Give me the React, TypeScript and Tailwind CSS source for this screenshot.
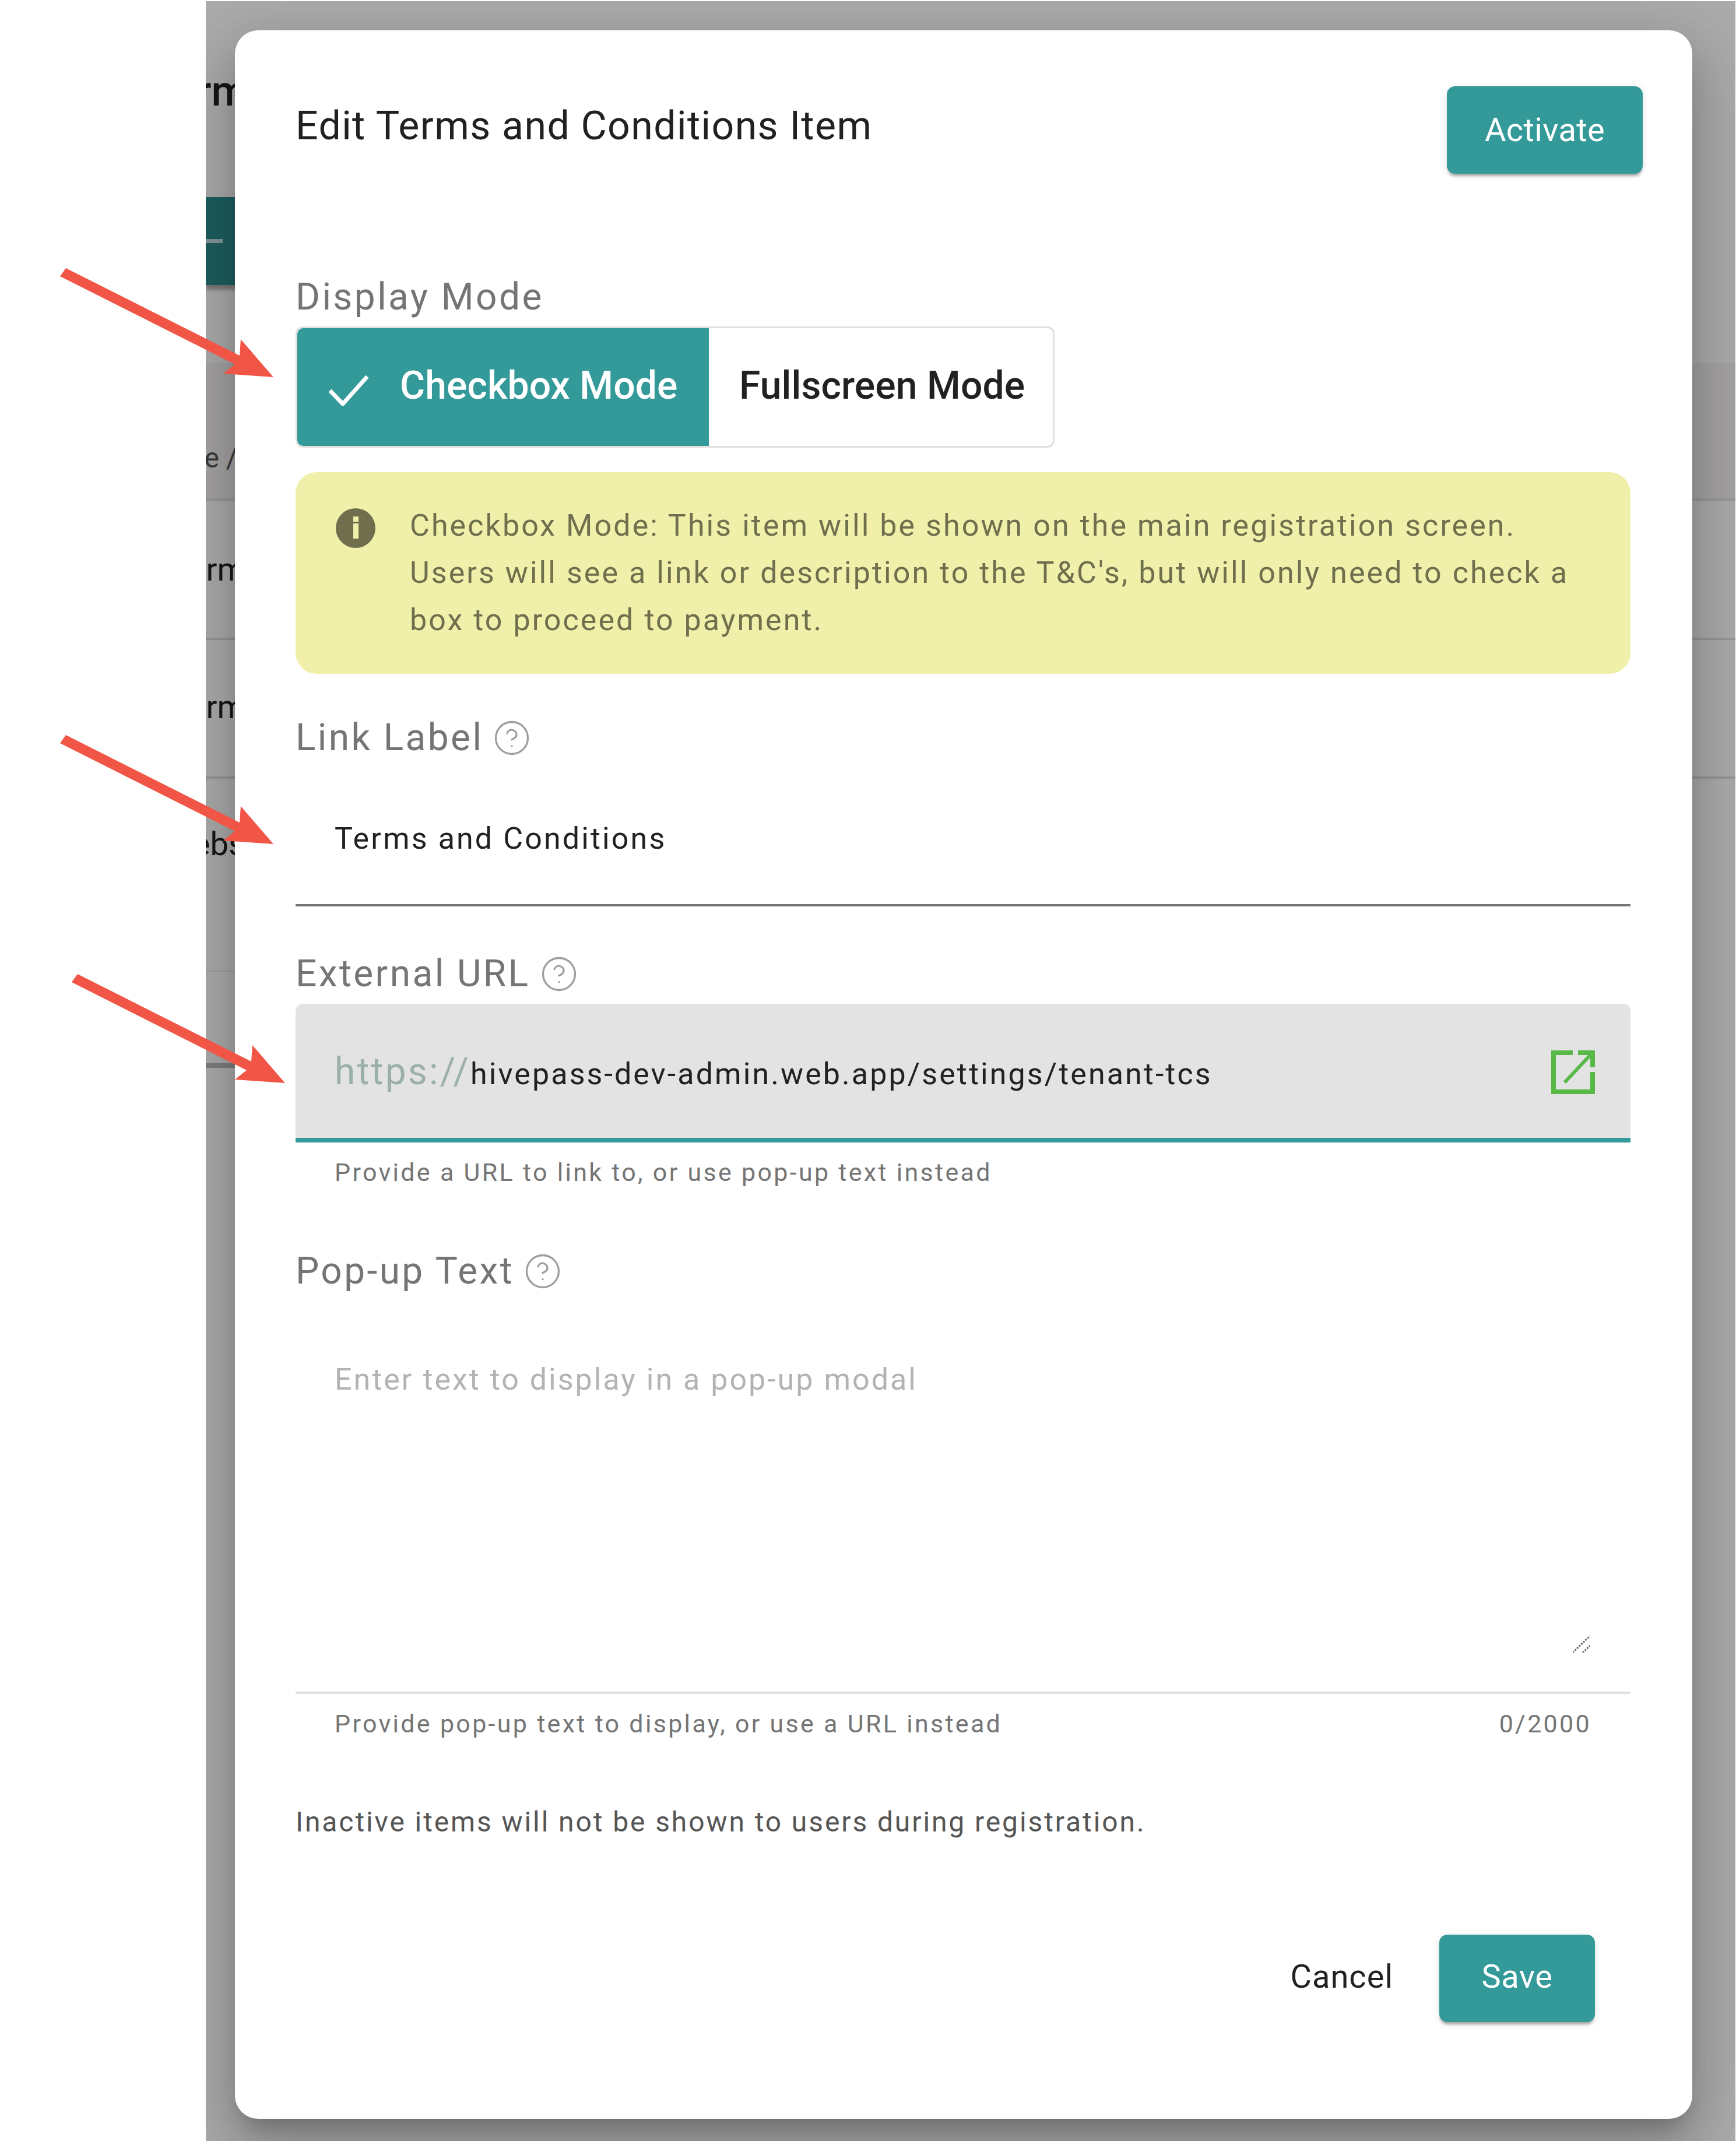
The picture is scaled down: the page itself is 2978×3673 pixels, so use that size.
import { CircleHelp } from "lucide-react";

const ROBOTO = "font-['Roboto',sans-serif]";
const ARROW = "113,460 411,610 413,582 469,647 383,641 403,625 103,474";

function FieldLabel({ text, help = true, className = "" }: { text: string; help?: boolean; className?: string }) {
  return (
    <div className={`flex h-[80px] items-center gap-[16px] pt-[4px] text-[64px] leading-[80px] tracking-[3.4px] text-[#757575] ${className}`}>
      <span>{text}</span>
      {help ? <CircleHelp className="h-[66px] w-[66px] text-[#9e9e9e]" strokeWidth={1.2} /> : null}
    </div>
  );
}

function Backdrop() {
  return (
    <div className="flex h-full flex-col text-[#212121]">
      <div className="flex h-[185px] shrink-0 items-end">
        <span className="-ml-[95px] whitespace-nowrap text-[72px] font-medium leading-[60px]">Terms</span>
      </div>
      <div className="mt-[151px] flex h-[151px] w-[200px] shrink-0 items-center bg-[#2e8c8c] shadow-[0_8px_6px_rgba(0,0,0,0.3)]">
        <div className="h-[7px] w-[29px] bg-white/70"></div>
      </div>
      <div className="mt-[134px] flex h-[236px] shrink-0 items-center border-b-[4px] border-[#e0e0e0] bg-[#f7f4f4] pt-[94px]">
        <span className="-ml-[105px] whitespace-nowrap text-[48px] text-[#555]">Name / Type</span>
      </div>
      <div className="flex h-[239px] shrink-0 items-center border-b-[4px] border-[#e0e0e0]">
        <span className="-ml-[60px] whitespace-nowrap text-[56px]">Terms</span>
      </div>
      <div className="flex h-[238px] shrink-0 items-center border-b-[4px] border-[#e0e0e0] pb-[4px]">
        <span className="-ml-[60px] whitespace-nowrap text-[56px]">Terms</span>
      </div>
      <div className="flex h-[331px] w-[50px] shrink-0 items-start border-b-[2px] border-[#ececec] pt-[70px]">
        <span className="-ml-[71px] whitespace-nowrap text-[56px]">Website</span>
      </div>
      <div className="h-[165px] w-[50px] shrink-0 border-b-[8px] border-[#bdbdbd]"></div>
    </div>
  );
}

export default function App() {
  return (
    <div className={`relative flex h-[3673px] w-[2978px] overflow-hidden bg-white ${ROBOTO}`}>
      <div className="w-[353px] shrink-0 bg-white"></div>
      <div className="relative mb-0 mr-px mt-[2px] flex-1 overflow-hidden bg-white">
        <Backdrop />
        <div className="absolute inset-0 bg-black/[0.33]"></div>
        <div className="absolute left-[50px] top-[50px] flex h-[3583px] w-[2500px] flex-col rounded-[40px] bg-white pl-[104px] pr-[106px] shadow-[0_26px_35px_-16px_rgba(0,0,0,0.2),0_56px_89px_7px_rgba(0,0,0,0.14),0_21px_108px_19px_rgba(0,0,0,0.12)]">
          <div className="mt-[96px] flex items-start justify-between">
            <h1 className="text-[68px] font-normal leading-[137px] tracking-[1.4px] text-[#212121]">Edit Terms and Conditions Item</h1>
            <button className="-mr-[21px] flex h-[150px] w-[336px] items-center justify-center rounded-[14px] bg-[#339999] text-[56px] tracking-[0.4px] text-white shadow-[0_6px_4px_-2px_rgba(0,0,0,0.3),0_2px_14px_rgba(0,0,0,0.1)]">
              Activate
            </button>
          </div>

          <FieldLabel text="Display Mode" help={false} className="mt-[170px]" />
          <div className="mt-[12px] flex h-[208px] w-[1302px] rounded-[12px] border-[3px] border-[#e0e0e0]">
            <div className="flex w-[706px] items-center gap-[54px] rounded-l-[10px] bg-[#339999] pl-[54px] text-white">
              <svg viewBox="0 0 68 52" className="mt-[12px] h-[52px] w-[68px]" fill="none" stroke="currentColor" strokeWidth="7">
                <path d="M2 26 L24 49 L66 2" />
              </svg>
              <span className="pb-[5px] text-[66px] font-medium tracking-[0.1px]">Checkbox Mode</span>
            </div>
            <div className="flex flex-1 items-center pb-[5px] pl-[52px] text-[66px] font-medium tracking-[0.1px] text-[#212121]">Fullscreen Mode</div>
          </div>

          <div className="mt-[42px] flex h-[346px] gap-[59px] rounded-[36px] bg-[#f0f0aa] pl-[69px] pt-[62px] text-[#6f6f4e]">
            <div className="flex h-[68px] w-[68px] shrink-0 flex-col items-center gap-[3px] rounded-full bg-[#6f6f4e] pt-[14px]">
              <div className="h-[9px] w-[9px] bg-[#f0f0aa]"></div>
              <div className="h-[26px] w-[9px] bg-[#f0f0aa]"></div>
            </div>
            <p className="-mt-[11px] text-[52px] leading-[81px] tracking-[3.05px]">
              Checkbox Mode: This item will be shown on the main registration screen.
              <br />
              Users will see a link or description to the T&amp;C's, but will only need to check a
              <br />
              box to proceed to payment.
            </p>
          </div>

          <FieldLabel text="Link Label" className="mt-[68px]" />
          <div className="h-[251px] border-b-[4px] border-[#757575] pl-[67px] pt-[95px] text-[52px] leading-[80px] tracking-[3.1px] text-[#212121]">
            Terms and Conditions
          </div>

          <FieldLabel text="External URL" className="mt-[74px]" />
          <div className="mt-[13px] flex h-[238px] items-center justify-between rounded-t-[12px] border-b-[8px] border-[#339999] bg-[#e3e3e3] pl-[67px] pr-[61px] pt-[4px]">
            <div className="flex items-baseline">
              <span className="text-[64px] tracking-[3.2px] text-[#9cb0ab]">https://</span>
              <span className="text-[52px] tracking-[3.07px] text-[#212121]">hivepass-dev-admin.web.app/settings/tenant-tcs</span>
            </div>
            <svg viewBox="0 0 75 75" className="h-[75px] w-[75px]" fill="none" stroke="#58b947">
              <path d="M37 4 H4 V71 H71 V37" strokeWidth="8" />
              <path d="M46 4 H71 V29" strokeWidth="8" />
              <path d="M23 55 L68 7" strokeWidth="6" />
            </svg>
          </div>
          <div className="mt-[26px] h-[50px] pl-[67px] text-[43px] leading-[50px] tracking-[3.3px] text-[#757575]">
            Provide a URL to link to, or use pop-up text instead
          </div>

          <FieldLabel text="Pop-up Text" className="mt-[103px]" />
          <div className="relative h-[687px] border-b-[4px] border-[#e0e0e0] pl-[67px] pt-[108px] text-[52px] leading-[80px] tracking-[3px] text-[#b3b3b3]">
            Enter text to display in a pop-up modal
            <svg viewBox="0 0 30 29" className="absolute bottom-[67px] right-[69px] h-[29px] w-[30px]" stroke="#666" strokeWidth="3" strokeDasharray="3 2" fill="none">
              <path d="M0 29 L30 0" />
              <path d="M17 29 L30 17" />
            </svg>
          </div>
          <div className="mt-[26px] flex h-[50px] justify-between px-[67px] text-[43px] leading-[50px] tracking-[3.3px] text-[#757575]">
            <span>Provide pop-up text to display, or use a URL instead</span>
            <span>0/2000</span>
          </div>

          <p className="mt-[114px] h-[62px] text-[48px] leading-[60px] tracking-[2.9px] text-[#555]">
            Inactive items will not be shown to users during registration.
          </p>

          <div className="mr-[61px] mt-[161px] flex items-center justify-end gap-[79px]">
            <span className="pb-[7px] text-[56px] tracking-[1px] text-[#212121]">Cancel</span>
            <button className="flex h-[150px] w-[267px] items-center justify-center rounded-[14px] bg-[#339999] pb-[7px] text-[56px] tracking-[0.5px] text-white shadow-[0_6px_4px_-2px_rgba(0,0,0,0.3),0_2px_14px_rgba(0,0,0,0.1)]">
              Save
            </button>
          </div>
        </div>
      </div>

      <svg className="pointer-events-none absolute left-0 top-0 h-[3673px] w-[2978px]" viewBox="0 0 2978 3673" fill="#f05545">
        <polygon points={ARROW} />
        <polygon points={ARROW} transform="translate(0 801)" />
        <polygon points={ARROW} transform="translate(20 1211)" />
      </svg>
    </div>
  );
}
